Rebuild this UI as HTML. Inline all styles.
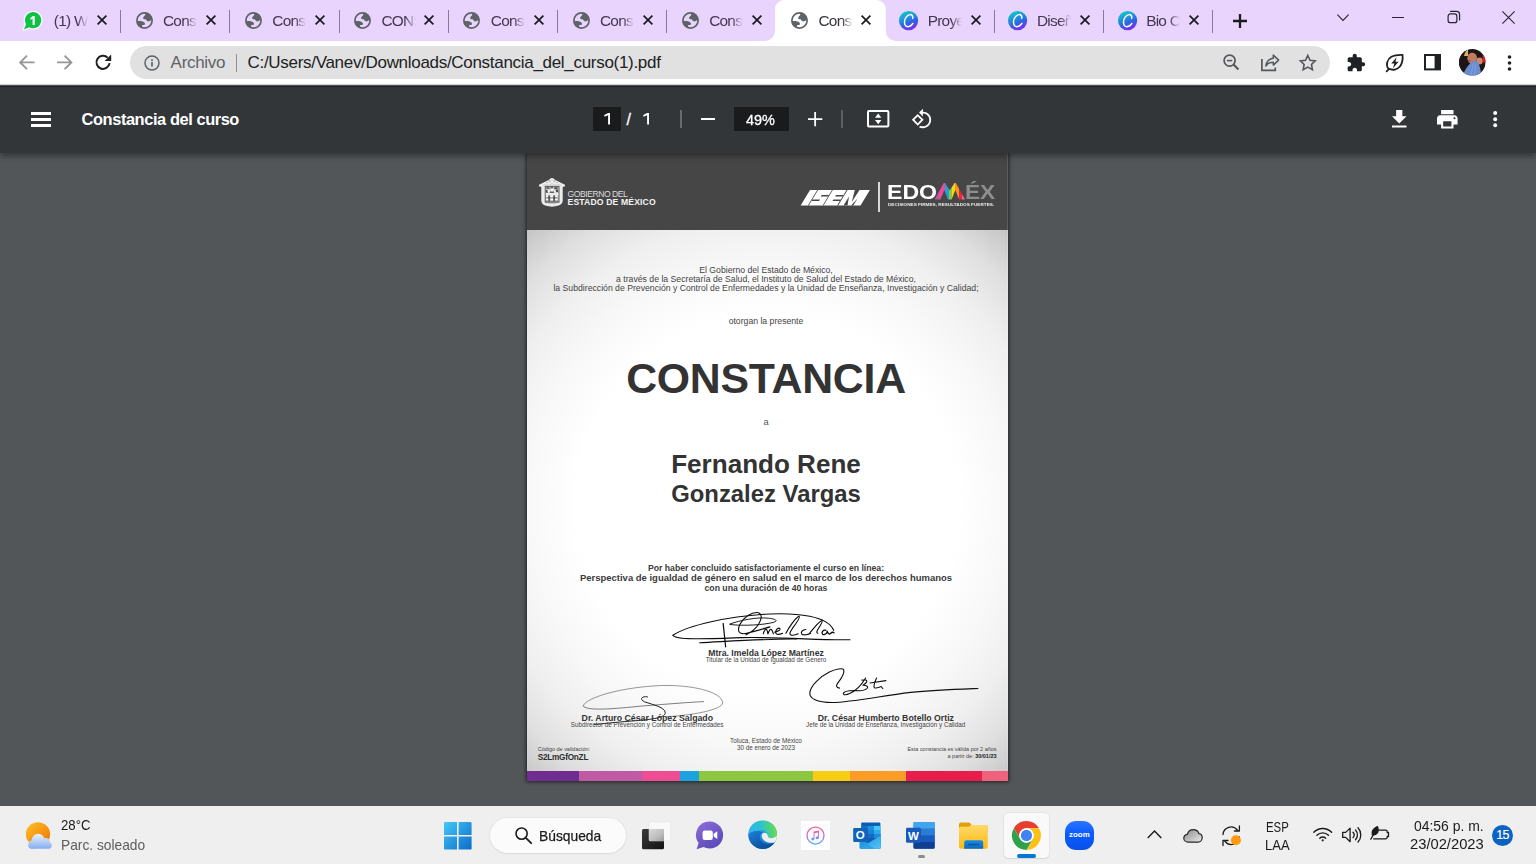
<!DOCTYPE html>
<html lang="es">
<head>
<meta charset="utf-8">
<title>Constancia del curso</title>
<style>
html,body{margin:0;padding:0;}
body{width:1536px;height:864px;overflow:hidden;position:relative;background:#525659;font-family:"Liberation Sans",sans-serif;}
.abs{position:absolute;}
.t{position:absolute;white-space:pre;line-height:1;}
svg{position:absolute;overflow:visible;}
/* ---------- tab strip ---------- */
#tabs{position:absolute;left:0;top:0;width:1536px;height:41px;background:#e8d4fd;}
.tab{position:absolute;top:0;height:41px;width:110px;}
.tab .ttl{position:absolute;left:42.5px;top:11.9px;width:34px;height:18px;overflow:hidden;white-space:pre;font-size:15.4px;line-height:18px;color:#3a2a45;letter-spacing:-0.75px;
  -webkit-mask-image:linear-gradient(90deg,#000 0,#000 68%,transparent 100%);mask-image:linear-gradient(90deg,#000 0,#000 68%,transparent 100%);}
.tab .x{left:85.5px;top:15.5px;width:10px;height:10px;}
.tab .ico{left:14px;top:12px;width:18px;height:18px;}
.sep{position:absolute;top:9.5px;width:1px;height:23.5px;background:#8a7a96;}
#tabact{position:absolute;left:766px;top:0;width:130px;height:41px;}
/* ---------- address bar ---------- */
#addr{position:absolute;left:0;top:41px;width:1536px;height:44px;background:#fff;}
#pill{position:absolute;left:129.7px;top:4.8px;width:1200.3px;height:33.1px;border-radius:17px;background:#e1e1e1;}
/* ---------- pdf toolbar ---------- */
#pdfbar{position:absolute;left:0;top:85px;width:1536px;height:68.4px;background:#323639;box-shadow:0 3px 6px rgba(0,0,0,.38);z-index:5;}
#pdfbar .t{color:#fff;}
.box{position:absolute;background:#191b1c;}
.ps{-webkit-text-stroke:.3px #fff;}
/* ---------- page ---------- */
#page{position:absolute;left:527px;top:153px;width:481px;height:628px;background:#fff;box-shadow:0 0 3.5px .6px rgba(0,0,0,.6);overflow:hidden;}
#page .t{color:#333;}
.c{position:absolute;left:0;width:481px;text-align:center;white-space:pre;line-height:1;color:#333;}
/* ---------- taskbar ---------- */
#task{position:absolute;left:0;top:806px;width:1536px;height:58px;background:#efefef;z-index:6;}
</style>
</head>
<body>
<div id="tabs">
<svg style="left:765.3px;top:0;width:130.8px;height:41px" viewBox="0 0 130.8 41"><path d="M0 41A10 10 0 0 0 10 31L10 9A9 9 0 0 1 19 0L111.8 0A9 9 0 0 1 120.8 9L120.8 31A10 10 0 0 0 130.8 41Z" fill="#fff"/></svg>
<svg class="ico" style="left:23.1px;top:10.1px;width:20px;height:20.5px" viewBox="0 0 20 20.5"><path d="M3.04 14.27A8.15 8.15 0 1 1 6.03 17.26L1 19.4Z" fill="#0cc144" stroke="#fcf8ff" stroke-width="2.6" stroke-linejoin="round"/><path d="M3.04 14.27A8.15 8.15 0 1 1 6.03 17.26L1 19.4Z" fill="#0cc144"/><path d="M7.5 8.1L9.9 6H11.7V15H9.6V8.6L7.5 9.9Z" fill="#fff"/></svg>
<div class="tab" style="left:11.3px"><div class="ttl" style="color:#45364f">(1) WhatsApp</div></div>
<svg class="x" style="left:96.6px;top:15.35px;width:10px;height:10px" viewBox="0 0 10 10"><path d="M.6.6l8.8 8.8M9.4.6L.6 9.4" stroke="#1d1a20" stroke-width="1.7" fill="none"/></svg>
<div class="sep" style="left:120.0px"></div>
<svg class="ico" style="left:135.5px;top:11.95px;width:17px;height:17px" viewBox="0 0 17 17"><defs><clipPath id="gc1"><circle cx="8.5" cy="8.5" r="8.1"/></clipPath></defs><circle cx="8.5" cy="8.5" r="7.6" fill="none" stroke="#5f6368" stroke-width="1.7"/><g clip-path="url(#gc1)" fill="#5f6368"><path d="M8.6 0L9.3 3.05C8.5 4 7.4 4.8 7.2 5.5C7.1 6.2 7.3 6.7 7.6 6.9C8.3 7.2 9.1 7 9.65 7.2C10.3 7.6 10.5 8.5 11 8.95C11.6 9.4 12.5 9.5 13.1 9.3C14 9 14.8 8.4 15.2 7.9L17 7.9L17 0Z"/><path d="M0 9.3L.6 9.3C1.5 9 2.8 8.8 3.75 8.95C5 9.1 6.4 9.2 7.2 9.65C8 10.1 8.8 10.7 8.95 11.4C9.1 12 9 12.5 8.6 12.8C8 13.2 7 12.9 6.5 13.1C6 13.5 6 14.3 6.2 14.9C6.4 15.5 6.8 16 7.2 16.25L7.2 17L0 17Z"/></g></svg>
<div class="tab" style="left:120.5px"><div class="ttl" style="color:#45364f">Constancia</div></div>
<svg class="x" style="left:205.8px;top:15.35px;width:10px;height:10px" viewBox="0 0 10 10"><path d="M.6.6l8.8 8.8M9.4.6L.6 9.4" stroke="#1d1a20" stroke-width="1.7" fill="none"/></svg>
<div class="sep" style="left:229.3px"></div>
<svg class="ico" style="left:244.8px;top:11.95px;width:17px;height:17px" viewBox="0 0 17 17"><defs><clipPath id="gc2"><circle cx="8.5" cy="8.5" r="8.1"/></clipPath></defs><circle cx="8.5" cy="8.5" r="7.6" fill="none" stroke="#5f6368" stroke-width="1.7"/><g clip-path="url(#gc2)" fill="#5f6368"><path d="M8.6 0L9.3 3.05C8.5 4 7.4 4.8 7.2 5.5C7.1 6.2 7.3 6.7 7.6 6.9C8.3 7.2 9.1 7 9.65 7.2C10.3 7.6 10.5 8.5 11 8.95C11.6 9.4 12.5 9.5 13.1 9.3C14 9 14.8 8.4 15.2 7.9L17 7.9L17 0Z"/><path d="M0 9.3L.6 9.3C1.5 9 2.8 8.8 3.75 8.95C5 9.1 6.4 9.2 7.2 9.65C8 10.1 8.8 10.7 8.95 11.4C9.1 12 9 12.5 8.6 12.8C8 13.2 7 12.9 6.5 13.1C6 13.5 6 14.3 6.2 14.9C6.4 15.5 6.8 16 7.2 16.25L7.2 17L0 17Z"/></g></svg>
<div class="tab" style="left:229.8px"><div class="ttl" style="color:#45364f">Constancia</div></div>
<svg class="x" style="left:315.1px;top:15.35px;width:10px;height:10px" viewBox="0 0 10 10"><path d="M.6.6l8.8 8.8M9.4.6L.6 9.4" stroke="#1d1a20" stroke-width="1.7" fill="none"/></svg>
<div class="sep" style="left:338.5px"></div>
<svg class="ico" style="left:354.0px;top:11.95px;width:17px;height:17px" viewBox="0 0 17 17"><defs><clipPath id="gc3"><circle cx="8.5" cy="8.5" r="8.1"/></clipPath></defs><circle cx="8.5" cy="8.5" r="7.6" fill="none" stroke="#5f6368" stroke-width="1.7"/><g clip-path="url(#gc3)" fill="#5f6368"><path d="M8.6 0L9.3 3.05C8.5 4 7.4 4.8 7.2 5.5C7.1 6.2 7.3 6.7 7.6 6.9C8.3 7.2 9.1 7 9.65 7.2C10.3 7.6 10.5 8.5 11 8.95C11.6 9.4 12.5 9.5 13.1 9.3C14 9 14.8 8.4 15.2 7.9L17 7.9L17 0Z"/><path d="M0 9.3L.6 9.3C1.5 9 2.8 8.8 3.75 8.95C5 9.1 6.4 9.2 7.2 9.65C8 10.1 8.8 10.7 8.95 11.4C9.1 12 9 12.5 8.6 12.8C8 13.2 7 12.9 6.5 13.1C6 13.5 6 14.3 6.2 14.9C6.4 15.5 6.8 16 7.2 16.25L7.2 17L0 17Z"/></g></svg>
<div class="tab" style="left:339.0px"><div class="ttl" style="color:#45364f">CONSTANCIA</div></div>
<svg class="x" style="left:424.3px;top:15.35px;width:10px;height:10px" viewBox="0 0 10 10"><path d="M.6.6l8.8 8.8M9.4.6L.6 9.4" stroke="#1d1a20" stroke-width="1.7" fill="none"/></svg>
<div class="sep" style="left:447.8px"></div>
<svg class="ico" style="left:463.3px;top:11.95px;width:17px;height:17px" viewBox="0 0 17 17"><defs><clipPath id="gc4"><circle cx="8.5" cy="8.5" r="8.1"/></clipPath></defs><circle cx="8.5" cy="8.5" r="7.6" fill="none" stroke="#5f6368" stroke-width="1.7"/><g clip-path="url(#gc4)" fill="#5f6368"><path d="M8.6 0L9.3 3.05C8.5 4 7.4 4.8 7.2 5.5C7.1 6.2 7.3 6.7 7.6 6.9C8.3 7.2 9.1 7 9.65 7.2C10.3 7.6 10.5 8.5 11 8.95C11.6 9.4 12.5 9.5 13.1 9.3C14 9 14.8 8.4 15.2 7.9L17 7.9L17 0Z"/><path d="M0 9.3L.6 9.3C1.5 9 2.8 8.8 3.75 8.95C5 9.1 6.4 9.2 7.2 9.65C8 10.1 8.8 10.7 8.95 11.4C9.1 12 9 12.5 8.6 12.8C8 13.2 7 12.9 6.5 13.1C6 13.5 6 14.3 6.2 14.9C6.4 15.5 6.8 16 7.2 16.25L7.2 17L0 17Z"/></g></svg>
<div class="tab" style="left:448.3px"><div class="ttl" style="color:#45364f">Constancia</div></div>
<svg class="x" style="left:533.6px;top:15.35px;width:10px;height:10px" viewBox="0 0 10 10"><path d="M.6.6l8.8 8.8M9.4.6L.6 9.4" stroke="#1d1a20" stroke-width="1.7" fill="none"/></svg>
<div class="sep" style="left:557.0px"></div>
<svg class="ico" style="left:572.5px;top:11.95px;width:17px;height:17px" viewBox="0 0 17 17"><defs><clipPath id="gc5"><circle cx="8.5" cy="8.5" r="8.1"/></clipPath></defs><circle cx="8.5" cy="8.5" r="7.6" fill="none" stroke="#5f6368" stroke-width="1.7"/><g clip-path="url(#gc5)" fill="#5f6368"><path d="M8.6 0L9.3 3.05C8.5 4 7.4 4.8 7.2 5.5C7.1 6.2 7.3 6.7 7.6 6.9C8.3 7.2 9.1 7 9.65 7.2C10.3 7.6 10.5 8.5 11 8.95C11.6 9.4 12.5 9.5 13.1 9.3C14 9 14.8 8.4 15.2 7.9L17 7.9L17 0Z"/><path d="M0 9.3L.6 9.3C1.5 9 2.8 8.8 3.75 8.95C5 9.1 6.4 9.2 7.2 9.65C8 10.1 8.8 10.7 8.95 11.4C9.1 12 9 12.5 8.6 12.8C8 13.2 7 12.9 6.5 13.1C6 13.5 6 14.3 6.2 14.9C6.4 15.5 6.8 16 7.2 16.25L7.2 17L0 17Z"/></g></svg>
<div class="tab" style="left:557.5px"><div class="ttl" style="color:#45364f">Constancia</div></div>
<svg class="x" style="left:642.8px;top:15.35px;width:10px;height:10px" viewBox="0 0 10 10"><path d="M.6.6l8.8 8.8M9.4.6L.6 9.4" stroke="#1d1a20" stroke-width="1.7" fill="none"/></svg>
<div class="sep" style="left:666.2px"></div>
<svg class="ico" style="left:681.7px;top:11.95px;width:17px;height:17px" viewBox="0 0 17 17"><defs><clipPath id="gc6"><circle cx="8.5" cy="8.5" r="8.1"/></clipPath></defs><circle cx="8.5" cy="8.5" r="7.6" fill="none" stroke="#5f6368" stroke-width="1.7"/><g clip-path="url(#gc6)" fill="#5f6368"><path d="M8.6 0L9.3 3.05C8.5 4 7.4 4.8 7.2 5.5C7.1 6.2 7.3 6.7 7.6 6.9C8.3 7.2 9.1 7 9.65 7.2C10.3 7.6 10.5 8.5 11 8.95C11.6 9.4 12.5 9.5 13.1 9.3C14 9 14.8 8.4 15.2 7.9L17 7.9L17 0Z"/><path d="M0 9.3L.6 9.3C1.5 9 2.8 8.8 3.75 8.95C5 9.1 6.4 9.2 7.2 9.65C8 10.1 8.8 10.7 8.95 11.4C9.1 12 9 12.5 8.6 12.8C8 13.2 7 12.9 6.5 13.1C6 13.5 6 14.3 6.2 14.9C6.4 15.5 6.8 16 7.2 16.25L7.2 17L0 17Z"/></g></svg>
<div class="tab" style="left:666.7px"><div class="ttl" style="color:#45364f">Constancia</div></div>
<svg class="x" style="left:752.0px;top:15.35px;width:10px;height:10px" viewBox="0 0 10 10"><path d="M.6.6l8.8 8.8M9.4.6L.6 9.4" stroke="#1d1a20" stroke-width="1.7" fill="none"/></svg>
<svg class="ico" style="left:791.0px;top:11.95px;width:17px;height:17px" viewBox="0 0 17 17"><defs><clipPath id="gc7"><circle cx="8.5" cy="8.5" r="8.1"/></clipPath></defs><circle cx="8.5" cy="8.5" r="7.6" fill="none" stroke="#5f6368" stroke-width="1.7"/><g clip-path="url(#gc7)" fill="#5f6368"><path d="M8.6 0L9.3 3.05C8.5 4 7.4 4.8 7.2 5.5C7.1 6.2 7.3 6.7 7.6 6.9C8.3 7.2 9.1 7 9.65 7.2C10.3 7.6 10.5 8.5 11 8.95C11.6 9.4 12.5 9.5 13.1 9.3C14 9 14.8 8.4 15.2 7.9L17 7.9L17 0Z"/><path d="M0 9.3L.6 9.3C1.5 9 2.8 8.8 3.75 8.95C5 9.1 6.4 9.2 7.2 9.65C8 10.1 8.8 10.7 8.95 11.4C9.1 12 9 12.5 8.6 12.8C8 13.2 7 12.9 6.5 13.1C6 13.5 6 14.3 6.2 14.9C6.4 15.5 6.8 16 7.2 16.25L7.2 17L0 17Z"/></g></svg>
<div class="tab" style="left:776.0px"><div class="ttl" style="color:#3b3340">Constancia</div></div>
<svg class="x" style="left:861.3px;top:15.35px;width:10px;height:10px" viewBox="0 0 10 10"><path d="M.6.6l8.8 8.8M9.4.6L.6 9.4" stroke="#1d1a20" stroke-width="1.7" fill="none"/></svg>
<svg class="ico" style="left:899.1px;top:10.8px;width:19.2px;height:19.2px" viewBox="0 0 19.2 19.2"><defs><linearGradient id="cv8" x1="0.25" y1="0.02" x2="0.7" y2="1"><stop offset="0" stop-color="#0ccdc6"/><stop offset=".28" stop-color="#1c9fd6"/><stop offset=".62" stop-color="#2f63e3"/><stop offset="1" stop-color="#8526f2"/></linearGradient></defs><circle cx="9.6" cy="9.6" r="9.6" fill="url(#cv8)"/><path d="M13.7 7.4C14.3 5.5 13.1 3.5 11.2 3.6C8 3.9 5.5 7.5 5.5 11C5.5 13.8 6.9 15.7 9 15.7C11 15.700 12.800 14.300 13.900 12.500" fill="none" stroke="#fff" stroke-width="1.450" stroke-linecap="round"/></svg>
<div class="tab" style="left:885.2px"><div class="ttl" style="color:#45364f">Proyecto</div></div>
<svg class="x" style="left:970.5px;top:15.35px;width:10px;height:10px" viewBox="0 0 10 10"><path d="M.6.6l8.8 8.8M9.4.6L.6 9.4" stroke="#1d1a20" stroke-width="1.7" fill="none"/></svg>
<div class="sep" style="left:994.0px"></div>
<svg class="ico" style="left:1008.4px;top:10.8px;width:19.2px;height:19.2px" viewBox="0 0 19.2 19.2"><defs><linearGradient id="cv9" x1="0.25" y1="0.02" x2="0.7" y2="1"><stop offset="0" stop-color="#0ccdc6"/><stop offset=".28" stop-color="#1c9fd6"/><stop offset=".62" stop-color="#2f63e3"/><stop offset="1" stop-color="#8526f2"/></linearGradient></defs><circle cx="9.6" cy="9.6" r="9.6" fill="url(#cv9)"/><path d="M13.7 7.4C14.3 5.5 13.1 3.5 11.2 3.6C8 3.9 5.5 7.5 5.5 11C5.5 13.8 6.9 15.7 9 15.7C11 15.700 12.800 14.300 13.900 12.500" fill="none" stroke="#fff" stroke-width="1.450" stroke-linecap="round"/></svg>
<div class="tab" style="left:994.5px"><div class="ttl" style="color:#45364f">Diseño</div></div>
<svg class="x" style="left:1079.8px;top:15.35px;width:10px;height:10px" viewBox="0 0 10 10"><path d="M.6.6l8.8 8.8M9.4.6L.6 9.4" stroke="#1d1a20" stroke-width="1.7" fill="none"/></svg>
<div class="sep" style="left:1103.2px"></div>
<svg class="ico" style="left:1117.6px;top:10.8px;width:19.2px;height:19.2px" viewBox="0 0 19.2 19.2"><defs><linearGradient id="cv10" x1="0.25" y1="0.02" x2="0.7" y2="1"><stop offset="0" stop-color="#0ccdc6"/><stop offset=".28" stop-color="#1c9fd6"/><stop offset=".62" stop-color="#2f63e3"/><stop offset="1" stop-color="#8526f2"/></linearGradient></defs><circle cx="9.6" cy="9.6" r="9.6" fill="url(#cv10)"/><path d="M13.7 7.4C14.3 5.5 13.1 3.5 11.2 3.6C8 3.9 5.5 7.5 5.5 11C5.5 13.8 6.9 15.7 9 15.7C11 15.700 12.800 14.300 13.900 12.500" fill="none" stroke="#fff" stroke-width="1.450" stroke-linecap="round"/></svg>
<div class="tab" style="left:1103.7px"><div class="ttl" style="color:#45364f">Bio Canva</div></div>
<svg class="x" style="left:1189.0px;top:15.35px;width:10px;height:10px" viewBox="0 0 10 10"><path d="M.6.6l8.8 8.8M9.4.6L.6 9.4" stroke="#1d1a20" stroke-width="1.7" fill="none"/></svg>
<div class="sep" style="left:1212.4px"></div>
<svg style="left:1232.8px;top:13.7px;width:14px;height:14px" viewBox="0 0 14 14"><path d="M7 0v14M0 7h14" stroke="#1d1a20" stroke-width="2.3" fill="none"/></svg>
<svg style="left:1336.7px;top:13.8px;width:12px;height:7.5px" viewBox="0 0 12 7.5"><path d="M.4.6L6 6.4 11.6.6" stroke="#2a2430" stroke-width="1.1" fill="none"/></svg>
<div class="abs" style="left:1391.5px;top:16.5px;width:12.5px;height:1.1px;background:#2a2430"></div>
<svg style="left:1446.5px;top:10px;width:13.4px;height:13.6px" viewBox="0 0 13.4 13.6"><rect x="1.1" y="3.9" width="8.8" height="8.8" rx="2.3" stroke="#2a2430" stroke-width="1.2" fill="none"/><path d="M3.6 1.45H9.6A3 3 0 0 1 12.6 4.45V10" stroke="#2a2430" stroke-width="1.2" fill="none" stroke-linecap="round"/></svg>
<svg style="left:1502px;top:10.6px;width:13px;height:13px" viewBox="0 0 13 13"><path d="M.4.4l12.2 12.2M12.6.4L.4 12.6" stroke="#2a2430" stroke-width="1.1" fill="none"/></svg>
</div>
<div id="addr">
<!-- back / forward / reload (coords relative to #addr, top=41) -->
<svg style="left:18.8px;top:13.5px;width:15.6px;height:14.8px" viewBox="0 0 15.6 14.8"><path d="M15.6 7.4H1.6M8 .6L1.2 7.4 8 14.2" stroke="#97979a" stroke-width="1.9" fill="none"/></svg>
<svg style="left:57px;top:13.5px;width:15.6px;height:14.8px" viewBox="0 0 15.6 14.8"><path d="M0 7.4H14M7.6 .6L14.4 7.4 7.6 14.2" stroke="#97979a" stroke-width="1.9" fill="none"/></svg>
<svg style="left:95.2px;top:12.8px;width:16.6px;height:16.4px" viewBox="0 0 16.6 16.4"><path d="M14.6 9.2A6.6 6.6 0 1 1 12.7 3.6" stroke="#1f1f1f" stroke-width="2" fill="none"/><path d="M16.2 .4V7H9.6z" fill="#1f1f1f"/></svg>
<div id="pill"></div>
<!-- info icon -->
<svg style="left:144.1px;top:13.5px;width:16px;height:16px" viewBox="0 0 16 16"><circle cx="8" cy="8" r="7" stroke="#5f6368" stroke-width="1.5" fill="none"/><rect x="7.15" y="7" width="1.7" height="4.6" fill="#5f6368"/><rect x="7.15" y="4.3" width="1.7" height="1.7" fill="#5f6368"/></svg>
<div class="t" id="arch" style="left:170.6px;top:13.4px;font-size:17px;color:#5f6368;letter-spacing:-.3px">Archivo</div>
<div class="abs" style="left:235.6px;top:12.5px;width:1.2px;height:18.5px;background:#8d8f93"></div>
<div class="t" id="url" style="left:247.5px;top:13.4px;font-size:17px;color:#202124;letter-spacing:-.3px">C:/Users/Vanev/Downloads/Constancia_del_curso(1).pdf</div>
<!-- right-side pill icons -->
<svg style="left:1222.800px;top:13.200px;width:16.400px;height:16.400px" viewBox="0 0 16.400 16.400"><circle cx="6.600" cy="6.600" r="5.500" stroke="#54575b" stroke-width="1.700" fill="none"/><path d="M10.600 10.600l4.800 4.800" stroke="#54575b" stroke-width="2.100" fill="none"/><path d="M3.900 6.600h5.400" stroke="#54575b" stroke-width="1.600"/></svg>
<svg style="left:1261px;top:13.100px;width:18.400px;height:17.200px" viewBox="0 0 18.400 17.200"><path d="M.9 5V16.300H14.300V13.600" stroke="#54575b" stroke-width="1.700" fill="none"/><path d="M12.300 1.100l5.300 5-5.300 5V8.300c-3.600 0-5.900 1.100-7.500 3.700.6-4 2.800-7 7.500-7.700z" stroke="#54575b" stroke-width="1.500" fill="none" stroke-linejoin="round"/></svg>
<svg style="left:1299.100px;top:12.800px;width:17.600px;height:16.900px" viewBox="0 0 24 23"><path d="M12 2l3.100 6.500 7 .9-5.100 4.900 1.300 7L12 17.900l-6.300 3.400L7 14.300l-5.100-4.900 7-.9z" stroke="#54575b" stroke-width="2.200" fill="none" stroke-linejoin="miter"/></svg>
<!-- extensions puzzle -->
<svg style="left:1346.2px;top:11.8px;width:20px;height:20px" viewBox="0 0 24 24"><path fill="#202124" d="M20.5 11H19V7c0-1.1-.9-2-2-2h-4V3.5C13 2.12 11.88 1 10.5 1S8 2.12 8 3.5V5H4c-1.1 0-1.99.9-1.99 2v3.8H3.5c1.49 0 2.7 1.21 2.7 2.7s-1.21 2.7-2.7 2.7H2V20c0 1.1.9 2 2 2h3.8v-1.5c0-1.49 1.21-2.7 2.7-2.7s2.7 1.21 2.7 2.7V22H17c1.1 0 2-.9 2-2v-4h1.5c1.38 0 2.500-1.12 2.500-2.500S21.880 11 20.500 11z"/></svg>
<!-- leaf/bolt -->
<svg style="left:1384.6px;top:12.4px;width:19px;height:19px" viewBox="0 0 19 19"><path d="M3.3 15.6C.6 11.8 2.2 6.2 6.4 3.8 9.6 2 13.800 1.700 17.600 1.800c.3 4.100-.2 8.600-2.700 11.700-2.600 3.200-7.300 4.100-10.700 2.300l-2.600 2.500" stroke="#202124" stroke-width="1.8" fill="none" stroke-linecap="round" stroke-linejoin="round"/><path d="M11.600 4.300L6.300 10.400h3l-1.300 4.800 5.500-6.500h-3.100z" fill="#202124"/></svg>
<!-- side panel -->
<svg style="left:1424.3px;top:13px;width:17px;height:16.4px" viewBox="0 0 17 16.4"><rect x="1" y="1" width="15" height="14.400" stroke="#202124" stroke-width="2" fill="none"/><rect x="10.600" y="1" width="5.400" height="14.400" fill="#202124"/></svg>
<!-- avatar -->
<svg style="left:1458.5px;top:8.400px;width:26.600px;height:26.600px" viewBox="0 0 26.600 26.600">
 <defs><clipPath id="avc"><circle cx="13.300" cy="13.300" r="13.300"/></clipPath><filter id="avb" x="-10%" y="-10%" width="120%" height="120%"><feGaussianBlur stdDeviation=".55"/></filter></defs>
 <g clip-path="url(#avc)"><rect width="26.600" height="26.600" fill="#1d1517"/>
 <g filter="url(#avb)">
 <rect x="0" y="0" width="9" height="7" fill="#b9c4d6"/>
 <rect x="4.200" y="1.200" width="3.800" height="5.600" fill="#e8a829"/>
 <path d="M9 0c-3 2-4.500 6-4.500 12s1 10 3 12l-8 2V5z" fill="#1a1214"/>
 <ellipse cx="13.200" cy="9.200" rx="4.800" ry="5.700" fill="#c27c5b"/>
 <path d="M8.500 3.500c2-3 8-3.500 11-.5 2 2 3 5 2.500 8-1.500-3-3-5-5-6.500-3-1.500-6-1.500-8.500-1z" fill="#1f1618"/>
 <ellipse cx="10.400" cy="12" rx="1.500" ry=".8" fill="#a8484a"/>
 <ellipse cx="20.600" cy="12" rx="3.200" ry="3.400" fill="#c98a6c"/>
 <rect x="23.600" y="6" width="3.500" height="7.500" fill="#e3172f"/>
 <path d="M4.500 24.500C7 19 10.500 14 14.500 12c2-.5 4 .3 4.500 1.500 1.500 3 2.500 6.500 3 10l-6 4H7z" fill="#6b8dcf"/>
 <path d="M12 26l2.500-12M15.500 26l1-11" stroke="#8ea9dd" stroke-width=".6" fill="none"/>
 </g></g>
</svg>
<!-- 3 dots -->
<svg style="left:1507px;top:13.600px;width:5px;height:16px" viewBox="0 0 5 16"><circle cx="2.500" cy="2" r="1.800" fill="#202124"/><circle cx="2.500" cy="8" r="1.800" fill="#202124"/><circle cx="2.500" cy="14" r="1.800" fill="#202124"/></svg>
</div>
<div class="abs" style="left:0;top:84px;width:1536px;height:1px;background:#d2d2d3;z-index:6"></div>
<div class="abs" style="left:0;top:85px;width:1536px;height:1px;background:#4c4f51;z-index:6"></div>
<div class="abs" style="left:0;top:86px;width:1536px;height:1px;background:#202427;z-index:6"></div>
<div class="abs" style="left:0;top:87px;width:1536px;height:1px;background:#2d3134;z-index:6"></div>
<div id="pdfbar">
<!-- coords relative to top=85 -->
<div class="abs" style="left:31px;top:27.2px;width:20px;height:2.4px;background:#fff"></div>
<div class="abs" style="left:31px;top:33.2px;width:20px;height:2.4px;background:#fff"></div>
<div class="abs" style="left:31px;top:39.2px;width:20px;height:2.4px;background:#fff"></div>
<div class="t" id="ptitle" style="left:81.6px;top:25.7px;font-size:16.4px;font-weight:700;letter-spacing:-.42px">Constancia del curso</div>
<div class="box" style="left:593px;top:22px;width:28.200px;height:24px"></div>
<svg style="left:603.700px;top:28px;width:6px;height:11.600px" viewBox="0 0 6 11.600"><path d="M4.100 0H6V11.600H4.100V2.300L.300 3.700V2Z" fill="#fff"/></svg>
<div class="t ps" style="left:626.5px;top:27px;font-size:16px">/</div>
<svg style="left:643px;top:28px;width:6px;height:11.600px" viewBox="0 0 6 11.600"><path d="M4.100 0H6V11.600H4.100V2.300L.300 3.700V2Z" fill="#fff"/></svg>
<div class="abs" style="left:679.900px;top:25.200px;width:1.800px;height:17.500px;background:#686b6e"></div>
<div class="abs" style="left:701px;top:33.2px;width:14.200px;height:1.800px;background:#fff"></div>
<div class="box" style="left:734.400px;top:22px;width:54.400px;height:24px"></div>
<div class="t ps" id="zoomv" style="left:746.4px;top:27.100px;font-size:15px;transform-origin:0 0;transform:scaleX(.965)">49%</div>
<svg style="left:808.3px;top:27.1px;width:14.3px;height:14.3px" viewBox="0 0 14.3 14.3"><path d="M7.15 0v14.3M0 7.15h14.3" stroke="#fff" stroke-width="1.8" fill="none"/></svg>
<div class="abs" style="left:841.100px;top:25.200px;width:1.800px;height:17.500px;background:#5d6063"></div>
<!-- fit to page -->
<svg style="left:867.4px;top:25.2px;width:22.4px;height:17.6px" viewBox="0 0 22.4 17.6"><rect x="1" y="1" width="20.4" height="15.6" rx="1" stroke="#fff" stroke-width="2" fill="none"/><path d="M11.200 3.400l3.200 4.300H8zM11.200 14.200l3.200-4.300H8z" fill="#fff"/></svg>
<!-- rotate ccw -->
<svg style="left:910.600px;top:22.600px;width:22px;height:22px" viewBox="0 0 24 24"><path fill="#fff" d="M7.340 6.410L.860 12.900l6.490 6.480 6.490-6.480-6.500-6.490zM3.690 12.900l3.660-3.660L11 12.900l-3.660 3.660-3.650-3.660zm15.670-6.260C17.610 4.880 15.300 4 13 4V.76L8.760 5 13 9.240V6c1.790 0 3.580.68 4.950 2.050 2.730 2.730 2.730 7.170 0 9.900C16.580 19.320 14.790 20 13 20c-.97 0-1.940-.21-2.840-.61l-1.490 1.490C10.020 21.620 11.510 22 13 22c2.300 0 4.610-.88 6.360-2.640 3.520-3.510 3.520-9.210 0-12.720z"/></svg>
<!-- download -->
<svg style="left:1391.9px;top:24.8px;width:14.500px;height:17.600px" viewBox="0 0 14 17"><path fill="#fff" d="M14 6h-4V0H4v6H0l7 7 7-7zM0 15v2h14v-2H0z"/></svg>
<!-- print -->
<svg style="left:1437px;top:24.800px;width:20.600px;height:18.600px" viewBox="0 0 20 18"><path fill="#fff" d="M17 5H3C1.340 5 0 6.340 0 8v6h4v4h12v-4h4V8c0-1.660-1.340-3-3-3zm-3 11H6v-5h8v5zm3-7c-.55 0-1-.45-1-1s.45-1 1-1 1 .45 1 1-.45 1-1 1zM16 0H4v4h12V0z"/></svg>
<!-- more -->
<svg style="left:1493px;top:26px;width:4.400px;height:16.400px" viewBox="0 0 4.400 16.400"><circle cx="2.200" cy="2.100" r="2" fill="#fff"/><circle cx="2.200" cy="8.200" r="2" fill="#fff"/><circle cx="2.200" cy="14.300" r="2" fill="#fff"/></svg>
</div>
<div id="page">
<!-- coords relative to page origin (527,153) -->
<div class="abs" id="pbody" style="left:0;top:76px;width:481px;height:552px;background:radial-gradient(circle farthest-corner at 50% 50%,#fff 0,#fff 52%,#f8f8f8 66%,#efefef 78%,#dfdfdf 89%,#c4c4c4 100%)"></div>
<div class="abs" id="phead" style="left:0;top:0;width:481px;height:76.5px;background:#464646"></div>
<!-- crest -->
<svg style="left:11.600px;top:24.500px;width:26px;height:28.800px" viewBox="0 0 26 28.800">
 <defs><filter id="cb" x="-5%" y="-5%" width="110%" height="110%"><feGaussianBlur stdDeviation=".32"/></filter></defs>
 <g filter="url(#cb)">
 <path d="M13 0C14.500.300 15.500 1.200 16.500 2.200C19 3.200 22 4.600 24 5.800L26 6.800C26.300 7.800 25.800 8.700 24.800 8.700L23.700 8.700L23.700 22.500C23.700 26 20.500 27.600 17.500 28L13 28.800L8.500 28C5.500 27.600 2.300 26 2.300 22.500L2.300 8.700L1.200 8.700C.200 8.700-.300 7.800 0 6.800L2 5.800C4 4.600 7 3.200 9.500 2.200C10.500 1.200 11.500.300 13 0Z" fill="#ececec"/>
 <g fill="#7b7b7b"><circle cx="10.600" cy="2.900" r=".55"/><circle cx="15.400" cy="2.900" r=".55"/><circle cx="8" cy="4.600" r=".5"/><circle cx="18" cy="4.600" r=".5"/><rect x="4" y="6.700" width="18" height=".6" opacity=".5"/></g>
 <ellipse cx="13" cy="3.900" rx="1.300" ry="1.900" fill="#fff" stroke="#9a9a9a" stroke-width=".4"/>
 <rect x="6.200" y="8.400" width="13.800" height="15.800" fill="#cdcdcd" stroke="#4e4e4e" stroke-width=".9"/>
 <g fill="#4a4a4a"><rect x="7.300" y="9.300" width="3.200" height="1.500"/><rect x="11.600" y="9.200" width="2.400" height="1.300"/><rect x="15.200" y="9.300" width="3.400" height="1.700"/><rect x="7" y="12" width="2" height="2.600"/><rect x="16.800" y="11.600" width="2.200" height="2.400"/><rect x="10.800" y="13.600" width="4.600" height="1.200"/>
 <rect x="9.400" y="17.400" width="1.500" height="5.400"/><rect x="14.400" y="17.400" width="1.500" height="5.400"/><rect x="7.200" y="19.400" width="11.400" height="1"/><rect x="7" y="22.600" width="12" height=".9"/></g>
 <g fill="#fbfbfb"><circle cx="9.700" cy="12.900" r="1.250"/><circle cx="13.200" cy="11.900" r="1.350"/><circle cx="15.900" cy="13.700" r="1"/><rect x="6.700" y="15.400" width="12.800" height="1.300"/><rect x="11.300" y="17.300" width="2.700" height="2"/><rect x="11.300" y="20.600" width="2.700" height="1.900"/><rect x="7.200" y="17.400" width="1.900" height="1.800"/><rect x="16.300" y="17.400" width="2.200" height="1.800"/><rect x="7.200" y="20.600" width="1.900" height="1.800"/><rect x="16.300" y="20.600" width="2.200" height="1.800"/></g>
 <rect x="9" y="25.300" width="8" height=".8" fill="#bdbdbd"/>
 </g>
</svg>
<div class="t" style="left:40.600px;top:37.300px;font-size:8.600px;color:#dcdcdc;letter-spacing:-.47px">GOBIERNO DEL</div>
<div class="t" style="left:40.600px;top:45.300px;font-size:8.600px;font-weight:700;color:#f4f4f4;letter-spacing:.15px">ESTADO DE MÉXICO</div>
<!-- ISEM -->
<svg style="left:283.060px;top:37px;width:60px;height:15.600px" viewBox="0 0 60 15.600">
 <g transform="skewX(-31)">
  <rect x="0" y="0" width="59.900" height="15.600" fill="#fff"/>
  <g fill="#464646">
   <rect x="7.200" y="0" width=".9" height="15.600"/>
   <rect x="22" y="0" width=".85" height="15.600"/>
   <rect x="36.500" y="0" width="1.050" height="15.600"/>
   <rect x="14.600" y="5" width="7.500" height="1.500"/>
   <rect x="8.100" y="9.400" width="7.600" height="1.500"/>
   <rect x="29" y="5" width="7.500" height="1.500"/>
   <rect x="29" y="9.400" width="7.500" height="1.500"/>
   <path d="M44.800 0L49 12L49.500 0Z"/>
   <path d="M42.900 15.600L42.900 6.500L46.900 15.600Z"/>
   <path d="M50.400 15.600L52.700 8.500L52.700 15.600Z"/>
  </g>
 </g>
</svg>
<div class="abs" style="left:350.800px;top:28.500px;width:1.800px;height:30px;background:#d8d8d8"></div>
<!-- EDOMEX -->
<div class="t" id="edo" style="left:360.100px;top:29.050px;font-size:20.500px;font-weight:700;color:#fff;transform-origin:0 0;transform:scaleX(1.125)">EDO</div>
<div class="abs" style="left:407.600px;top:30px;width:30.400px;height:16.500px;background:linear-gradient(90deg,#b455a0 0,#b455a0 14%,#ec4a93 14%,#ec4a93 33%,#229fda 33%,#229fda 46%,#8cc63f 46%,#8cc63f 56%,#f9d616 56%,#f9d616 66%,#f7941d 66%,#f7941d 79%,#e8234a 79%,#e8234a 90%,#f06a80 90%);clip-path:polygon(0 100%,30% 0,34% 0,50% 44%,66% 0,70% 0,100% 100%,81% 100%,68% 42%,56% 100%,44% 100%,32% 42%,19% 100%)"></div>
<div class="t" id="ex" style="left:437.500px;top:29.050px;font-size:20.500px;font-weight:700;color:#8e8e8e;transform-origin:0 0;transform:scaleX(1.105)">ÉX</div>
<div class="t" style="left:360.800px;top:49.800px;font-size:3.900px;font-weight:700;color:#ededed;transform-origin:0 0;transform:scaleX(1.200)">DECISIONES FIRMES, RESULTADOS FUERTES.</div>
<!-- body text -->
<div class="c" style="width:478px;top:112.900px;font-size:8.680px;color:#444">El Gobierno del Estado de México,</div>
<div class="c" style="width:478px;top:121.800px;font-size:8.680px;color:#444">a través de la Secretaría de Salud, el Instituto de Salud del Estado de México,</div>
<div class="c" style="width:478px;top:130.800px;font-size:8.680px;color:#444">la Subdirección de Prevención y Control de Enfermedades y la Unidad de Enseñanza, Investigación y Calidad;</div>
<div class="c" style="width:478px;top:163.700px;font-size:8.680px;color:#444">otorgan la presente</div>
<div class="c" style="width:478px;top:203.700px;font-size:42.800px;letter-spacing:-.25px;font-weight:700;color:#333">CONSTANCIA</div>
<div class="c" style="width:478px;top:264px;font-size:9.400px;color:#555">a</div>
<div class="c" style="width:478px;top:298px;font-size:26.050px;font-weight:700;color:#333">Fernando Rene</div>
<div class="c" style="width:478px;top:329.200px;font-size:23.870px;font-weight:700;color:#333">Gonzalez Vargas</div>
<div class="c" style="width:478px;top:410.500px;font-size:8.680px;font-weight:700;color:#3a3a3a">Por haber concluido satisfactoriamente el curso en línea:</div>
<div class="c" style="width:478px;top:420.400px;font-size:9.480px;font-weight:700;color:#3a3a3a">Perspectiva de igualdad de género en salud en el marco de los derechos humanos</div>
<div class="c" style="width:478px;top:431.200px;font-size:8.680px;font-weight:700;color:#3a3a3a">con una duración de 40 horas</div>
<!-- signature 1 -->
<svg style="left:133px;top:447.600px;width:210px;height:70px" viewBox="0 0 1536 512" fill="none" stroke="#0c0c0c" stroke-width="8.200" stroke-linecap="round">
 <path d="M95 250C200 180 500 110 800 95C1000 85 1230 110 1270 215"/>
 <path d="M95 250C110 290 400 275 600 268C900 262 1200 290 1390 283"/>
 <path d="M290 305C500 295 800 275 1000 278"/>
 <path d="M462 165L480 335" stroke-width="9"/>
</svg>
<svg style="left:203px;top:402px;width:160px;height:115px" viewBox="0 0 1202 864" fill="none" stroke="#0c0c0c" stroke-width="8.600" stroke-linecap="round" stroke-linejoin="round">
 <path d="M300 540C230 560 150 585 100 592C60 590 55 560 75 520C100 470 160 430 205 432C245 440 240 480 215 520C195 550 160 580 120 600"/>
 <path d="M0 518C80 490 200 465 290 475C350 482 360 495 330 505C260 525 100 535 0 522" stroke-width="7"/>
 <path d="M250 592C255 570 268 552 275 560C282 570 282 585 285 592C292 570 305 552 312 560C320 570 322 585 326 592M335 580C360 575 385 560 372 550C355 545 338 570 345 588C355 600 380 595 395 588"/>
 <path d="M420 588C440 550 490 470 520 460C530 470 500 510 470 550C450 580 440 595 460 602C480 605 500 598 512 592"/>
 <path d="M570 560C545 562 528 580 540 595C555 605 590 598 605 588"/>
 <path d="M600 585C620 560 670 500 692 490C700 500 680 530 660 560C650 575 650 585 660 588"/>
 <path d="M720 565C700 560 685 580 695 595C710 605 730 590 730 572C735 590 745 598 755 590C765 580 772 575 782 585" stroke-width="10"/>
</svg>
<div class="c" style="width:478px;top:496.200px;font-size:8.680px;font-weight:700;color:#333">Mtra. Imelda López Martínez</div>
<div class="c" style="width:478px;top:504.400px;font-size:6.310px;color:#444">Titular de la Unidad de Igualdad de Género</div>
<!-- signature 2 -->
<svg style="left:33px;top:512px;width:210px;height:70px" viewBox="0 0 1536 512" fill="none" stroke="#444" stroke-width="5" stroke-linecap="round">
 <path d="M170 300C180 240 450 160 750 150C950 145 1180 190 1190 275C1190 330 950 370 780 378" stroke="#555" stroke-width="4.500"/>
 <path d="M170 300C190 340 400 320 600 300C800 285 950 272 1050 268"/>
 <path d="M640 233C600 225 575 250 620 270C680 290 770 310 770 350C770 390 650 400 520 410C400 420 300 430 250 436" stroke="#1a1a1a" stroke-width="7"/>
</svg>
<!-- signature 3 -->
<svg style="left:243px;top:512px;width:240px;height:120px" viewBox="0 0 1536 768" fill="none" stroke="#101010" stroke-width="7.200" stroke-linecap="round" stroke-linejoin="round">
 <path d="M445 148C425 145 420 135 432 118C450 95 480 60 472 30C465 18 420 25 380 45C320 75 262 130 255 175C250 215 300 238 400 240C520 238 700 200 900 175C1050 160 1200 155 1330 150"/>
 <path d="M612 83C590 120 560 160 510 183C490 192 465 195 470 180C480 165 530 160 575 165M588 97C615 90 640 100 595 130C640 128 635 160 575 165"/>
 <path d="M682 83C672 105 660 135 668 145C680 152 700 140 712 138C716 142 718 148 722 150M640 115L742 100"/>
</svg>
<div class="t" id="n2" style="left:54.600px;top:560.700px;font-size:8.750px;font-weight:700;color:#333">Dr. Arturo César López Salgado</div>
<div class="t" id="s2" style="left:43.800px;top:568.800px;font-size:6.310px;color:#444">Subdirector de Prevención y Control de Enfermedades</div>
<div class="t" id="n3" style="left:290.800px;top:560.700px;font-size:8.730px;font-weight:700;color:#333">Dr. César Humberto Botello Ortiz</div>
<div class="t" id="s3" style="left:279px;top:568.800px;font-size:6.310px;color:#444">Jefe de la Unidad de Enseñanza, Investigación y Calidad</div>
<div class="c" style="width:478px;top:585.400px;font-size:6.300px;color:#444">Toluca, Estado de México</div>
<div class="c" style="width:478px;top:592px;font-size:6.300px;color:#444">30 de enero de 2023</div>
<div class="t" style="left:10.700px;top:593.800px;font-size:5.470px;color:#444">Código de validación:</div>
<div class="t" style="left:10.700px;top:600.500px;font-size:8.200px;letter-spacing:-.23px;font-weight:700;color:#2e2e2e">S2LmGfOnZL</div>
<div class="t" style="right:11.500px;top:593.800px;font-size:5.470px;color:#444">Esta constancia es válida por 2 años</div>
<div class="t" style="right:11.500px;top:600.700px;font-size:5.470px;color:#444">a partir de: <b style="color:#222">30/01/23</b></div>
<div class="abs" style="left:480px;top:0;width:1px;height:628px;background:rgba(255,255,255,.13)"></div>
<!-- colour bar -->
<div class="abs" style="left:0;top:617.700px;width:481px;height:10.300px;background:linear-gradient(90deg,#6f2c91 0,#6f2c91 52px,#c05aa4 52px,#c05aa4 115.300px,#ef4d93 115.300px,#ef4d93 153px,#1aa3dd 153px,#1aa3dd 172px,#8dc63f 172px,#8dc63f 285.900px,#f8cd14 285.900px,#f8cd14 323px,#f99d27 323px,#f99d27 378.800px,#e81d4b 378.800px,#e81d4b 454.900px,#f0617d 454.900px)"></div>
</div>
<div id="task">
<!-- coords relative to top=806 -->
<!-- weather -->
<svg style="left:24px;top:14px;width:30px;height:30px" viewBox="0 0 30 30">
 <defs><linearGradient id="sun" x1="0.15" y1="0.1" x2="0.9" y2="0.9"><stop offset="0" stop-color="#fbb81f"/><stop offset="1" stop-color="#f0780a"/></linearGradient>
 <linearGradient id="cld" gradientUnits="userSpaceOnUse" x1="0" y1="14" x2="0" y2="28.700"><stop offset="0" stop-color="#e9f1fb"/><stop offset="1" stop-color="#86aef0"/></linearGradient></defs>
 <circle cx="14" cy="14.300" r="12.100" fill="url(#sun)"/>
 <g fill="url(#cld)"><circle cx="14.200" cy="20.300" r="6.500"/><circle cx="21.600" cy="22.300" r="4.400"/><circle cx="8.400" cy="24.600" r="4"/><rect x="4.400" y="22.500" width="23.400" height="6.200" rx="3.100"/></g>
</svg>
<div class="t" style="left:61px;top:11.700px;font-size:14.800px;color:#1b1b1b;transform-origin:0 0;transform:scaleX(.893)">28°C</div>
<div class="t" style="left:61px;top:31.700px;font-size:14.800px;color:#5d5d5d;transform-origin:0 0;transform:scaleX(.930)">Parc. soleado</div>
<!-- windows logo -->
<svg style="left:444px;top:15.700px;width:27.600px;height:27.600px" viewBox="0 0 27.600 27.600">
 <defs><linearGradient id="win" x1="0" y1="0" x2="1" y2="1"><stop offset="0" stop-color="#45c8f8"/><stop offset="1" stop-color="#0b6bc8"/></linearGradient></defs>
 <path d="M0 1.200A1.200 1.200 0 0 1 1.200 0H13v13H0zM14.600 0h11.800A1.200 1.200 0 0 1 27.600 1.200V13h-13zM0 14.600h13v13H1.200A1.200 1.200 0 0 1 0 26.400zM14.600 14.600h13v11.800a1.200 1.200 0 0 1-1.200 1.200H14.600z" fill="url(#win)"/>
</svg>
<!-- search pill -->
<div class="abs" style="left:490px;top:11.500px;width:136px;height:35.500px;border-radius:18px;background:#fbfbfb;box-shadow:0 0 1.500px .3px rgba(0,0,0,.10),0 1px 1.500px rgba(0,0,0,.05)"></div>
<svg style="left:515px;top:21px;width:17px;height:17px" viewBox="0 0 17 17"><circle cx="6.600" cy="6.600" r="5.600" stroke="#1b1b1b" stroke-width="1.600" fill="none"/><path d="M10.800 10.800l5.400 5.400" stroke="#1b1b1b" stroke-width="1.800" stroke-linecap="round"/></svg>
<div class="t" style="left:538.500px;top:21.600px;font-size:15px;color:#1b1b1b;-webkit-text-stroke:.25px #1b1b1b;transform-origin:0 0;transform:scaleX(.92)">Búsqueda</div>
<!-- task view -->
<svg style="left:642px;top:15.700px;width:28.600px;height:27.200px" viewBox="0 0 28.600 27.200">
 <defs><linearGradient id="tv1" x1="0" y1="0" x2="1" y2="1"><stop offset="0" stop-color="#3a3a3a"/><stop offset="1" stop-color="#111"/></linearGradient>
 <linearGradient id="tv2" x1="0" y1="0" x2="1" y2="1"><stop offset="0" stop-color="#d9d9d9"/><stop offset=".6" stop-color="#bdbdbd"/><stop offset="1" stop-color="#9a9a9a"/></linearGradient></defs>
 <rect x="0" y="7" width="22" height="20.200" rx="1.500" fill="url(#tv1)"/>
 <rect x="7" y="0" width="21.600" height="19" rx="1.500" fill="#f9f9f9" stroke="#e2e2e2" stroke-width=".5"/>
 <rect x="7" y="7" width="15" height="12" fill="url(#tv2)"/>
</svg>
<!-- chat -->
<svg style="left:695px;top:14.600px;width:29px;height:29px" viewBox="0 0 29 29">
 <defs><linearGradient id="ch" x1="0.2" y1="0" x2="0.8" y2="1"><stop offset="0" stop-color="#8b6bd8"/><stop offset="1" stop-color="#5547b4"/></linearGradient></defs>
 <path d="M14.800.500a13.500 13.500 0 1 1-6.300 25.500L1.600 28.200l2-6.200A13.500 13.500 0 0 1 14.800.500z" fill="url(#ch)"/>
 <rect x="7.600" y="9.500" width="10.200" height="9.400" rx="2" fill="#fff"/><path d="M18.600 12.800l3.700-2.500v7.800l-3.700-2.500z" fill="#fff"/>
</svg>
<!-- edge -->
<svg style="left:747.500px;top:14.200px;width:29.400px;height:29.400px" viewBox="0 0 30 30">
 <defs><linearGradient id="ed1" x1="0.1" y1="0.2" x2="0.9" y2="1"><stop offset="0" stop-color="#1a78cf"/><stop offset=".55" stop-color="#0f58a6"/><stop offset="1" stop-color="#0b4a92"/></linearGradient>
 <linearGradient id="ed2" x1="0.05" y1="0.5" x2="0.95" y2="0.35"><stop offset="0" stop-color="#2fb6ee"/><stop offset=".45" stop-color="#2cc2d0"/><stop offset=".8" stop-color="#4fd37a"/><stop offset="1" stop-color="#74dd45"/></linearGradient>
 <linearGradient id="ed3" x1="0.2" y1="0" x2="0.6" y2="1"><stop offset="0" stop-color="#33b4ef"/><stop offset="1" stop-color="#0f74cc"/></linearGradient>
 <clipPath id="edc"><circle cx="15" cy="15" r="14.600"/></clipPath></defs>
 <g clip-path="url(#edc)">
 <rect width="30" height="30" fill="url(#ed3)"/>
 <path d="M0 15C.500 6 7 .400 15 .400c9 0 15 6.500 15 13.500 0 2.500-1 4.300-2.500 5.500-2 1.600-5 1.800-6.800.600-1.200-1-.700-2.500-.700-4 0-3-2.600-5.600-6.500-5.600C8 10.400 3 12.500 0 15z" fill="url(#ed2)"/>
 <path d="M0 15.500C1.500 12.500 6 10.800 10.500 11.200c1.500.200 3 .800 4 1.700-2 1.200-3 3.400-2.400 5.800.800 3.200 4 5.600 8.400 5.800 2.400.100 4.800-.500 6.800-1.600C25.500 27 21 30 15 30 7 30 .500 24 0 15.500z" fill="url(#ed1)"/>
 <path d="M14 16.300C13.800 13.600 16.600 12.200 18.800 13.600C20.400 15 19.900 17 21.400 18.200C24 19.200 27.200 18.500 29.800 15.600L30 19.500C29.500 21.200 28.300 22.500 26.900 23C24 23.700 20.200 23.200 17.600 21.600C15.400 20.200 14.100 18.300 14 16.300Z" fill="#efefef"/>
 </g>
</svg>
<!-- itunes -->
<div class="abs" style="left:800.800px;top:15px;width:29.300px;height:28.800px;background:#fff"></div>
<svg style="left:805.800px;top:19.800px;width:19px;height:19px" viewBox="0 0 19 19">
 <defs><linearGradient id="it" x1="0.5" y1="0" x2="0.5" y2="1"><stop offset="0" stop-color="#f7627e"/><stop offset=".5" stop-color="#c65fe0"/><stop offset="1" stop-color="#4fb4f5"/></linearGradient></defs>
 <circle cx="9.500" cy="9.500" r="8.500" fill="#fbfbfd" stroke="url(#it)" stroke-width="1.250"/>
 <path d="M7.600 5.600l5.400-1.200v7.100c0 1-.8 1.700-1.800 1.700s-1.500-.6-1.500-1.300c0-.8.700-1.400 1.600-1.400.3 0 .6.100.8.200V6.500L8.500 7.300v5.400c0 1-.8 1.700-1.800 1.700s-1.500-.6-1.500-1.300c0-.8.700-1.400 1.600-1.400.3 0 .6.100.8.200z" fill="url(#it)"/>
</svg>
<!-- outlook -->
<svg style="left:853.400px;top:15.700px;width:28.400px;height:26.800px" viewBox="0 0 28.400 26.800">
 <defs><linearGradient id="ol1" x1="0" y1="0" x2="1" y2="1"><stop offset="0" stop-color="#1f8fe0"/><stop offset="1" stop-color="#4fc6f6"/></linearGradient></defs>
 <rect x="8.200" y=".400" width="19.200" height="16" rx="1.200" fill="#0a5db3"/><rect x="8.200" y="12" width="19.200" height="11" fill="#0f5fae"/>
 <rect x="8.200" y="3.900" width="6.400" height="4.100" fill="#1070c8"/><rect x="14.600" y="3.900" width="6.400" height="4.100" fill="#1e90e0"/><rect x="21" y="3.900" width="6.400" height="4.100" fill="#3fc8f7"/>
 <rect x="8.200" y="8" width="6.400" height="4" fill="#0f64b8"/><rect x="14.600" y="8" width="6.400" height="4" fill="#1a80d5"/><rect x="21" y="8" width="6.400" height="4" fill="#2baaee"/>
 <rect x="8.200" y="12" width="6.400" height="4" fill="#0c58a5"/><rect x="14.600" y="12" width="6.400" height="4" fill="#146ac2"/><rect x="21" y="12" width="6.400" height="4" fill="#1d8cda"/>
 <path d="M6.700 14.500l10.500 7.300 10.600-8.300v11.800a1.500 1.500 0 0 1-1.500 1.500H8.200a1.500 1.500 0 0 1-1.500-1.500z" fill="#1575c9"/>
 <path d="M6.700 26.200L27.800 13.500v11.800a1.500 1.500 0 0 1-1.500 1.500H8.200a1.500 1.500 0 0 1-1.500-.6z" fill="url(#ol1)"/>
 <path d="M6.700 15.200l14.500 11.600H8.200a1.500 1.500 0 0 1-1.500-1.500z" fill="#2a9fe8" opacity=".85"/>
 <rect x=".200" y="5.900" width="14.200" height="14.200" rx="1.300" fill="#0d64b8"/>
 <text x="7.300" y="17.200" font-family="Liberation Sans" font-weight="700" font-size="11.500" fill="#fff" text-anchor="middle">O</text>
</svg>
<!-- word -->
<svg style="left:906.300px;top:15.700px;width:28.700px;height:26.800px" viewBox="0 0 28.700 26.800">
 <rect x="7.500" y="0" width="21.200" height="26.800" rx="1.600" fill="#2b7cd3"/>
 <rect x="7.500" y="0" width="21.200" height="6.700" fill="#41a5ee"/><rect x="7.500" y="6.700" width="21.200" height="6.700" fill="#2b7cd3"/><rect x="7.500" y="13.400" width="21.200" height="6.700" fill="#185abd"/><path d="M7.500 20.100h21.200v5.100a1.600 1.600 0 0 1-1.600 1.600H9.100a1.600 1.600 0 0 1-1.600-1.600z" fill="#103f91"/>
 <rect x="0" y="5.800" width="15" height="15" rx="1.300" fill="#185abd"/>
 <text x="7.500" y="17.600" font-family="Liberation Sans" font-weight="700" font-size="11.500" fill="#fff" text-anchor="middle">W</text>
</svg>
<div class="abs" style="left:917.500px;top:48.800px;width:7px;height:3.200px;border-radius:1.600px;background:#8b8b8b"></div>
<!-- explorer -->
<svg style="left:959px;top:15.700px;width:28.800px;height:26.800px" viewBox="0 0 28.800 26.800">
 <defs><linearGradient id="fx1" x1="0" y1="0" x2="0" y2="1"><stop offset="0" stop-color="#ffd968"/><stop offset="1" stop-color="#fbba12"/></linearGradient>
 <linearGradient id="fx2" x1="0" y1="0" x2="0" y2="1"><stop offset="0" stop-color="#1a8ce2"/><stop offset="1" stop-color="#0d68be"/></linearGradient></defs>
 <path d="M0 2.500A2 2 0 0 1 2 .500h7.600c.8 0 1.300.300 1.800.900l1.400 1.600H26.800a2 2 0 0 1 2 2V10H0z" fill="#dfa00c"/>
 <path d="M0 6.300A1.500 1.500 0 0 1 1.500 4.800H10l2-1.700H27.300a1.500 1.500 0 0 1 1.500 1.500V24.800a2 2 0 0 1-2 2H2a2 2 0 0 1-2-2z" fill="url(#fx1)"/>
 <path d="M5.200 26.800v-6.300a2.200 2.200 0 0 1 2.200-2.200h14.600a2.200 2.200 0 0 1 2.200 2.200v6.300z" fill="url(#fx2)"/>
 <rect x="8.800" y="21.800" width="11.600" height="1.500" rx=".75" fill="#0b57a4"/>
</svg>
<!-- chrome (active) -->
<div class="abs" style="left:1004.200px;top:7.200px;width:44.600px;height:45.200px;border-radius:4.500px;background:#f9f9f9;box-shadow:0 0 0 .7px rgba(0,0,0,.055),0 1px 1.500px rgba(0,0,0,.07)"></div>
<svg style="left:1011.050px;top:13.650px;width:30.900px;height:30.900px" viewBox="0 0 48 48">
 <circle cx="24" cy="24" r="22.300" fill="#fff"/>
 <path d="M4.510 12.750A22.500 22.500 0 0 1 43.490 12.750L24 12.750A11.250 11.250 0 0 0 14.260 29.630Z" fill="#e63f31"/>
 <path d="M43.490 12.750A22.500 22.500 0 0 1 24 46.500L33.740 29.630A11.250 11.250 0 0 0 24 12.750Z" fill="#fbc118"/>
 <path d="M24 46.500A22.500 22.500 0 0 1 4.510 12.750L14.260 29.630A11.250 11.250 0 0 0 33.740 29.630Z" fill="#2fa04b"/>
 <circle cx="24" cy="24" r="11" fill="#fff"/><circle cx="24" cy="24" r="8.700" fill="#4084f2"/>
</svg>
<div class="abs" style="left:1017px;top:48.300px;width:19px;height:4.100px;border-radius:2.050px;background:#0477d2"></div>
<!-- zoom -->
<div class="abs" style="left:1064.900px;top:14.600px;width:29.200px;height:29.200px;border-radius:11.200px;background:linear-gradient(180deg,#2a74ff 0,#0b5cff 45%,#0a50e6 100%)"></div>
<div class="t" style="left:1068.900px;top:25.400px;font-size:7.900px;font-weight:700;color:#fff;letter-spacing:.05px">zoom</div>
<!-- tray -->
<svg style="left:1147px;top:24px;width:15px;height:8.600px" viewBox="0 0 15 8.600"><path d="M.700 7.900L7.500 1.100l6.800 6.800" stroke="#1b1b1b" stroke-width="1.400" fill="none"/></svg>
<svg style="left:1182.700px;top:22.700px;width:20px;height:13.700px" viewBox="0 0 21 14.600">
 <defs><linearGradient id="od" x1="0" y1="0" x2="1" y2="1"><stop offset="0" stop-color="#8a8a8a"/><stop offset=".6" stop-color="#c4c4c4"/><stop offset="1" stop-color="#ececec"/></linearGradient></defs>
 <path d="M5.200 13.900C2.700 13.900.700 12.100.700 9.800c0-2.100 1.600-3.800 3.700-4.100C5.200 2.800 7.800.700 10.800.700c2.800 0 5.200 1.800 6.100 4.300 2 .3 3.400 2 3.400 4.100 0 2.600-1.800 4.800-4.300 4.800z" fill="url(#od)" stroke="#262626" stroke-width="1.300"/>
</svg>
<svg style="left:1221.400px;top:18.800px;width:20.600px;height:21px" viewBox="0 0 20.600 21"><path d="M2 9.500A8 8 0 0 1 16.400 5.200M18.400 1v5h-5M18.400 12A8 8 0 0 1 4 16.300M2 20.500v-5h5" stroke="#1b1b1b" stroke-width="1.300" fill="none" stroke-linecap="round" stroke-linejoin="round"/><circle cx="14.900" cy="15.200" r="5" fill="#ff9a0e"/></svg>
<div class="t" style="left:1265.700px;top:14.400px;font-size:14.800px;color:#1b1b1b;transform-origin:0 0;transform:scaleX(.770)">ESP</div>
<div class="t" style="left:1264.900px;top:32.200px;font-size:14.800px;color:#1b1b1b;transform-origin:0 0;transform:scaleX(.880)">LAA</div>
<!-- wifi -->
<svg style="left:1312.600px;top:21.400px;width:19.400px;height:14.600px" viewBox="0 0 19.400 14.600" fill="none" stroke="#1b1b1b" stroke-width="1.400" stroke-linecap="round"><path d="M.800 5.200a12.500 12.500 0 0 1 17.800 0"/><path d="M3.900 8.300a8.200 8.200 0 0 1 11.600 0"/><path d="M6.800 11.200a4.100 4.100 0 0 1 5.800 0"/><circle cx="9.700" cy="13.300" r="1.100" fill="#1b1b1b" stroke="none"/></svg>
<!-- volume -->
<svg style="left:1341.600px;top:21.400px;width:19.400px;height:15.800px" viewBox="0 0 19.400 15.800" fill="none" stroke="#1b1b1b" stroke-width="1.300" stroke-linecap="round" stroke-linejoin="round"><path d="M.700 5.400h3l4.400-4.300v13.600L3.700 10.400h-3z"/><path d="M11 5.200a4 4 0 0 1 0 5.400"/><path d="M13.500 3a7.200 7.200 0 0 1 0 9.800"/><path d="M16 .800a10.400 10.400 0 0 1 0 14.200"/></svg>
<!-- battery with leaf -->
<svg style="left:1370.400px;top:20px;width:20px;height:16px" viewBox="0 0 20 16" fill="none" stroke="#1b1b1b" stroke-width="1.300" stroke-linejoin="round"><path d="M8.500 4.200h7.200a1.500 1.500 0 0 1 1.500 1.500v.8h1.300v4h-1.300v.8a1.500 1.500 0 0 1-1.500 1.500H3.200"/><path d="M7.400.600C4 2.200 1.500 5 2.300 8.800c2.800.6 5.600-1.200 5.900-4.200.100-1.400-.2-2.800-.8-4z" fill="#1b1b1b"/><path d="M4.800 6.500L.800 13.200" stroke-linecap="round"/></svg>
<div class="t" style="left:1414px;top:11.900px;font-size:15px;color:#1b1b1b;transform-origin:0 0;transform:scaleX(.929)">04:56 p. m.</div>
<div class="t" style="left:1410px;top:30.100px;font-size:15px;color:#1b1b1b;transform-origin:0 0;transform:scaleX(.982)">23/02/2023</div>
<div class="abs" style="left:1492.100px;top:18.900px;width:21px;height:21px;border-radius:50%;background:#0a63c0"></div>
<div class="t" style="left:1496.300px;top:23.300px;font-size:12.400px;color:#fff;letter-spacing:-.6px;-webkit-text-stroke:.2px #fff">15</div>
</div>
</body>
</html>
